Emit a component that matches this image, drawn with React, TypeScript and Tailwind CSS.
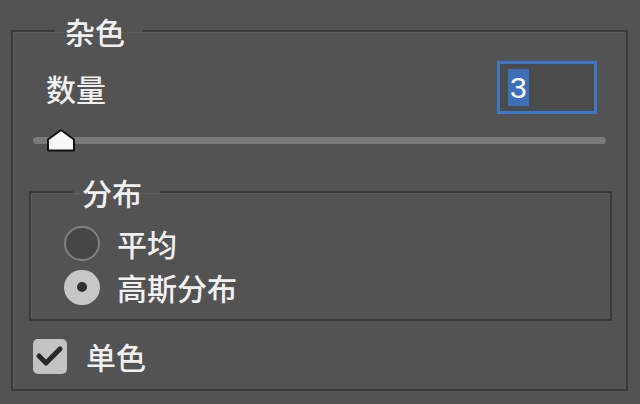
const cjk = { fontFamily: '"Noto Sans CJK SC", "Noto Sans", sans-serif' };

function SliderThumb() {
  return (
    <svg width="30" height="23" viewBox="0 0 30 23" className="absolute left-[13px] top-0">
      <path
        d="M2 21.5 V10.5 L13.6 2 Q15 1 16.4 2 L28 10.5 V21.5 Z"
        fill="#f7f7f7"
        stroke="#111"
        strokeWidth="2"
        strokeLinejoin="round"
      />
    </svg>
  );
}

function Radio({ checked }: { checked?: boolean }) {
  if (checked) {
    return (
      <div className="flex items-center justify-center w-[36px] h-[35px] rounded-full bg-[#c6c6c6]">
        <div className="w-[10px] h-[10px] rounded-full bg-[#303030]" />
      </div>
    );
  }
  return <div className="w-[36px] h-[35px] rounded-full border-2 border-[#808080] bg-[#464646]" />;
}

function Checkbox() {
  return (
    <div className="flex items-center justify-center w-[34px] h-[35px] rounded-[5px] bg-[#c3c3c3]">
      <svg width="34" height="35" viewBox="0 0 34 35">
        <path d="M6 17 L13 24 L27 10" fill="none" stroke="#2a2a2a" strokeWidth="5" strokeLinecap="round" strokeLinejoin="round" />
      </svg>
    </div>
  );
}

export default function App() {
  return (
    <div className="w-[640px] h-[404px] bg-[#535353] text-[#f0f0f0] font-medium overflow-hidden" style={cjk}>
      <div className="pt-[13px] pl-[11px] pr-[12px]">
        <fieldset className="border-2 border-[#3a3a3a] shadow-[inset_1px_1px_0_#5c5c5c] pb-[15px]">
          <legend className="ml-[42px] pl-[10px] pr-[18px] text-[30px] leading-[36px]">杂色</legend>

          {/* Amount */}
          <div className="flex items-center justify-between h-[53px] mt-[12px] pl-[33px] pr-[29px]">
            <span className="text-[30px] leading-[36px]">数量</span>
            <div className="flex items-center w-[100px] h-[53px] border-[3px] border-[#3b78cc] bg-[#4b4b4b] pl-[8px]">
              <span
                className="bg-[#3d70b8] text-white text-[30px] leading-[37px] px-[2px]"
                style={{ fontFamily: '"Liberation Sans", Arial, sans-serif' }}
              >
                3
              </span>
            </div>
          </div>

          {/* Slider */}
          <div className="relative flex items-center h-[23px] mt-[15px] mx-[20px]">
            <div className="w-full h-[7px] rounded-full bg-[#7a7a7a]" />
            <SliderThumb />
          </div>

          {/* Distribution */}
          <fieldset className="mt-[22px] ml-[16px] mr-[14px] border-2 border-[#3a3a3a] shadow-[inset_1px_1px_0_#5c5c5c] pt-[11px] pb-[10px] pl-[33px]">
            <legend className="ml-[9px] pl-[9px] pr-[18px] text-[30px] leading-[36px]">分布</legend>
            <div className="flex items-center gap-[17px] h-[44px]">
              <Radio />
              <span className="text-[30px] leading-[36px]">平均</span>
            </div>
            <div className="flex items-center gap-[17px] h-[44px]">
              <Radio checked />
              <span className="text-[30px] leading-[36px]">高斯分布</span>
            </div>
          </fieldset>

          {/* Monochromatic */}
          <div className="flex items-center gap-[19px] mt-[17px] pl-[20px]">
            <Checkbox />
            <span className="text-[30px] leading-[36px]">单色</span>
          </div>
        </fieldset>
      </div>
    </div>
  );
}
